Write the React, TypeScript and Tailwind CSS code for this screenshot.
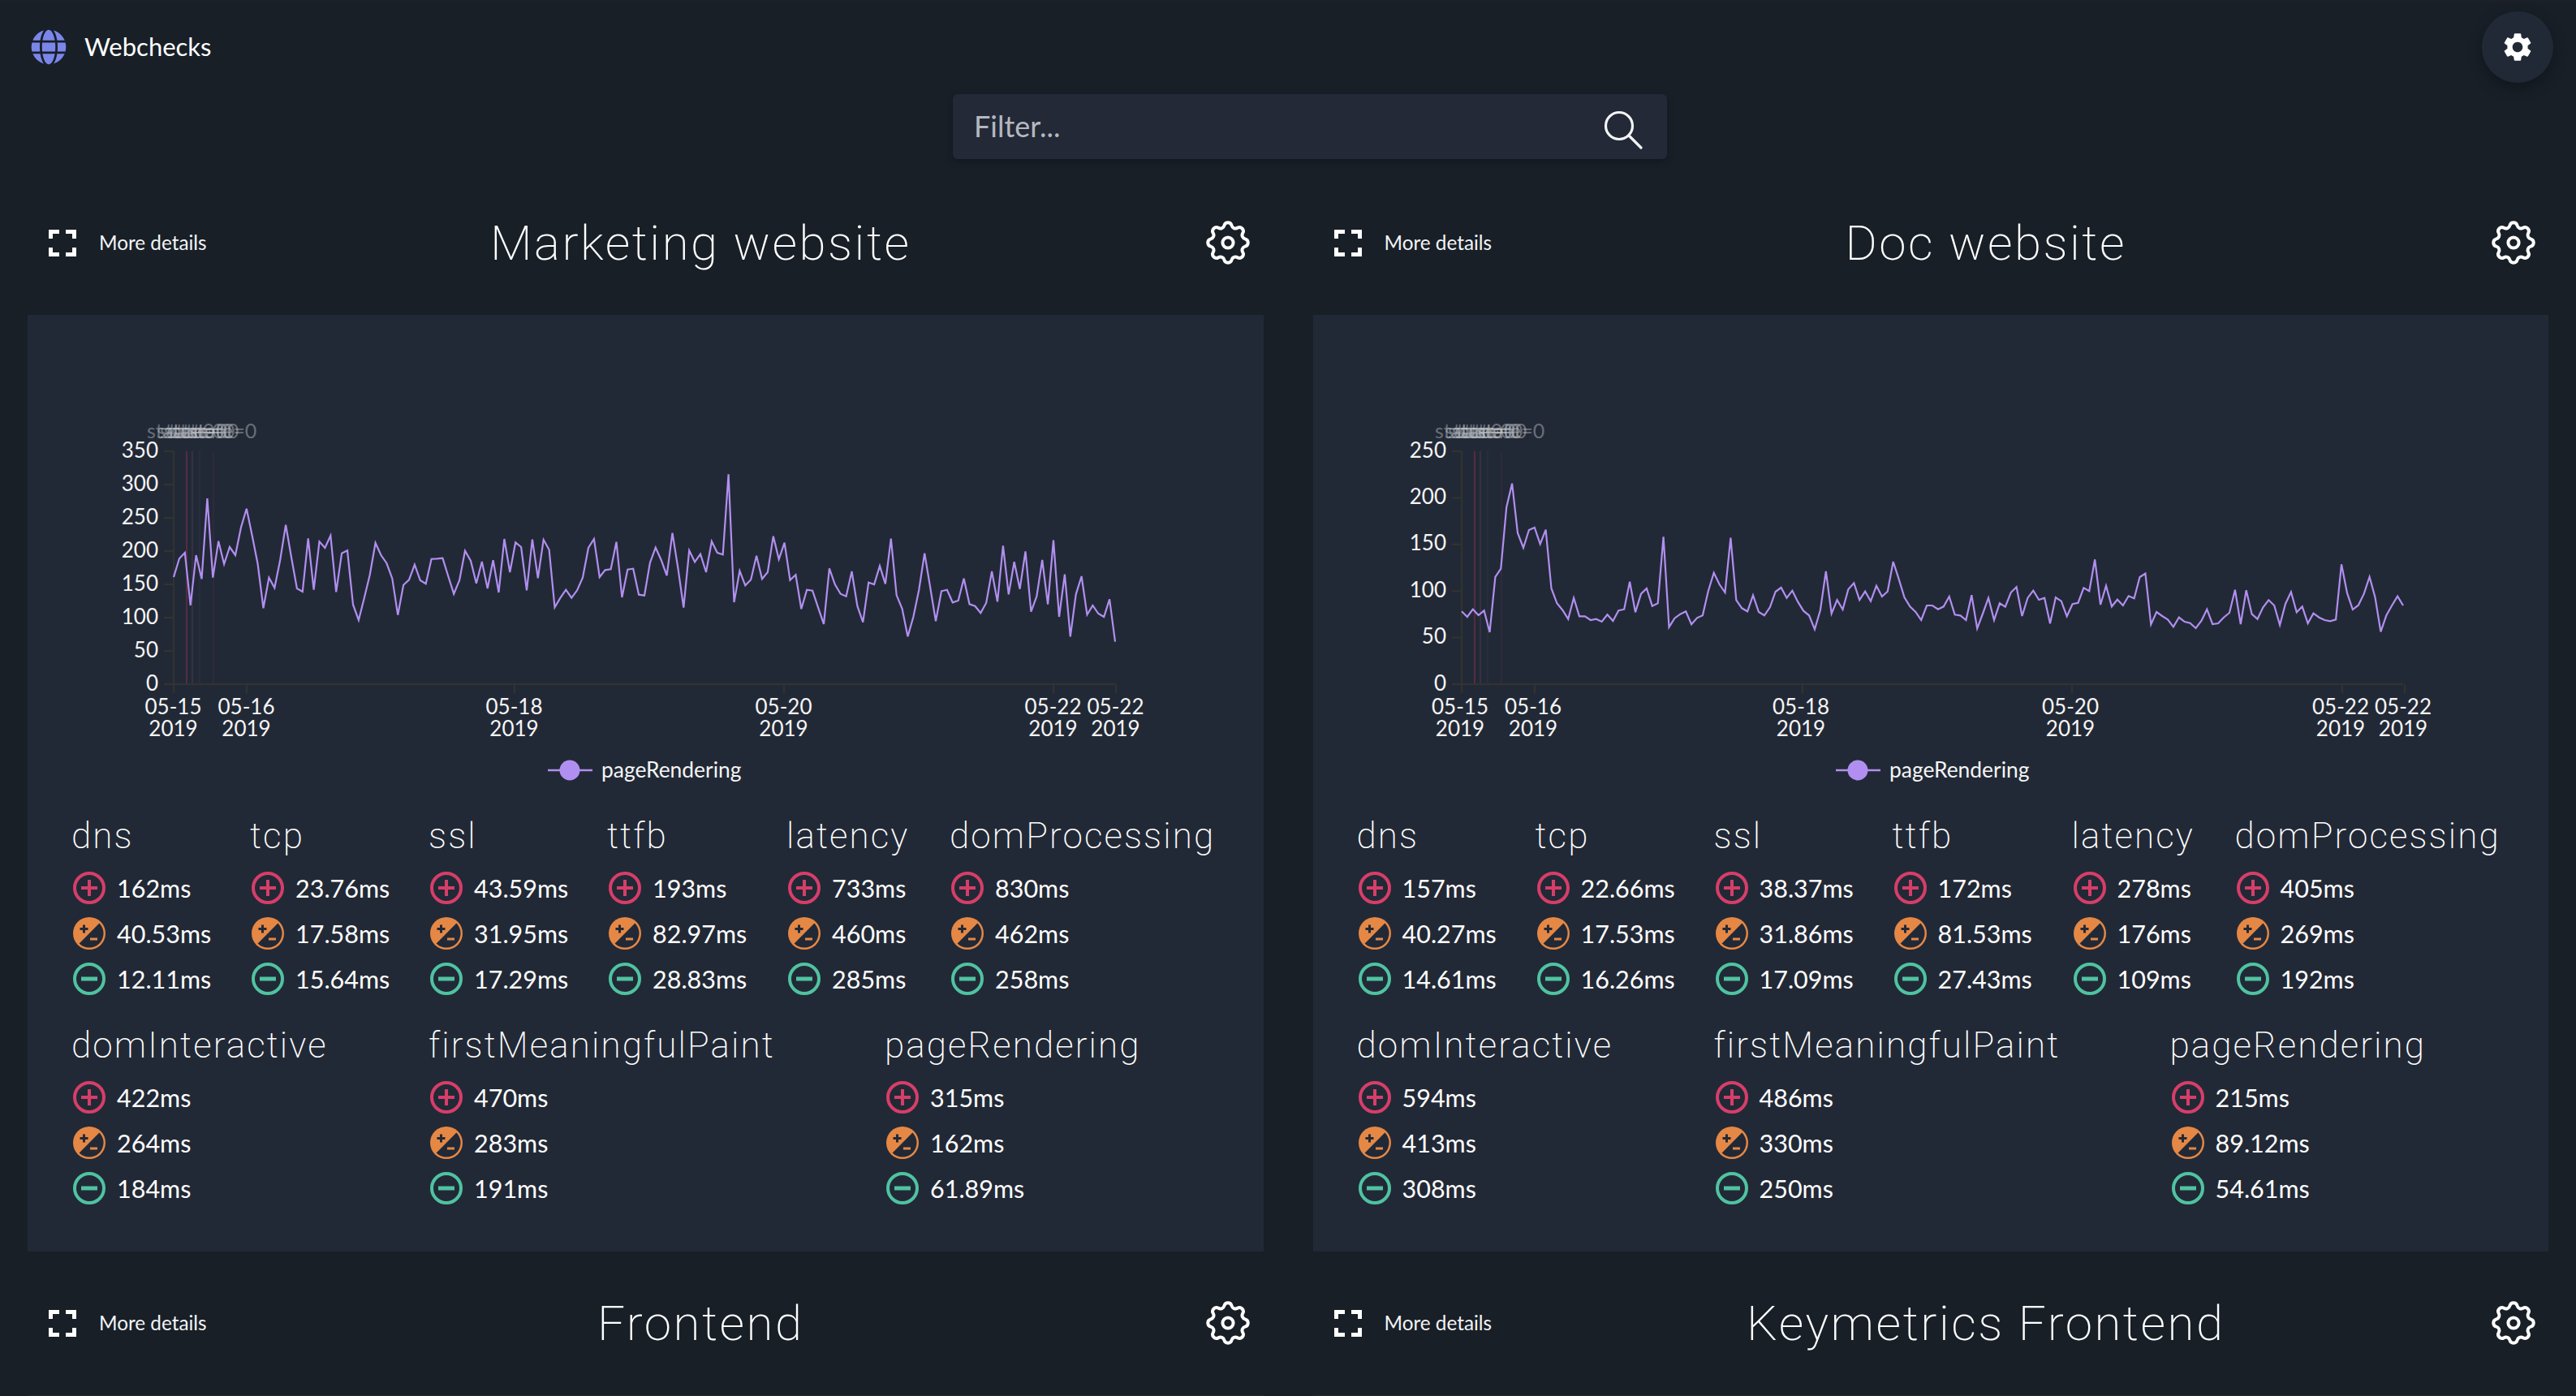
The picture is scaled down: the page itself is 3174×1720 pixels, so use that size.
import React from "react";
import { FaGlobe } from "react-icons/fa";
import { MdSettings } from "react-icons/md";

const A1 = [663,595,573,768,582,670,372,665,530,615,552,582,480,410,510,615,778,665,703,600,470,590,705,717,520,710,532,555,510,718,575,565,765,822,740,655,537,582,612,668,803,692,673,617,675,688,596,595,593,660,725,675,566,603,686,606,705,601,720,522,645,535,552,712,524,667,525,562,775,740,710];
const A2 = [590,562,515,405,372,513,487,484,383,588,485,482,578,581,460,404,450,507,350,480,626,415,457,428,495,381,423,430,133,606,490,544,523,434,520,495,362,447,386,524,505,631,560,563,625,687,481,540,575,584,492,620,680,533,540,472,538,371,580,630,733,660,560,425,550,676,565,560,607,600,518,613,620,646,608,492,604,397,577,457,557,418,641,585,450,614,377,660,503,733,577,510,652,618,648,660,595,752].map((v) => v + 150);
const B1 = [790,810,782,804,787,867,663,632,405,317,500,555,489,480,541,488,705,760,785,818,740,808,808,822,818,828,802,825,787,782,680,793,725,705,770,760,514,848,815,800,790,838,814,805,715,647,690,720,518,748,778,790,730,792,805,775,717,702,740,713,755,788,805,856,785,642,798,748,783,708,685,748,716,752,695,735,716,606,670,738,772,792,822,768,768,782,772];
const B2 = [585,652,655,672,580,703,648,590,672,610,623,570,550,657,590,563,597,590,685,588,602,658,613,608,553,565,448,615,545,622,596,618,583,592,513,500,688,642,657,670,697,662,678,683,702,675,632,687,684,662,645,560,687,562,650,668,625,598,618,690,612,568,643,622,684,647,662,672,676,670,466,572,633,617,575,512,588,715,655,618,584,618].map((v) => v + 150);

type Metric = { name: string; w: string; values: [string, string, string] };
type ChartData = { ticks: number[]; points: number[]; x0: number; x1: number; xt: number[]; labels: number[]; labelShift: number };

const LATO = "font-['Lato','Liberation_Sans',sans-serif]";

function Plus() {
  return (
    <svg viewBox="0 0 40 40" className="w-10 h-10 shrink-0">
      <circle cx="20" cy="20" r="18" fill="none" stroke="#d63e69" strokeWidth="4" />
      <path d="M10 20H30M20 10V30" stroke="#d63e69" strokeWidth="4" />
    </svg>
  );
}
function Mid() {
  return (
    <svg viewBox="0 0 40 40" className="w-10 h-10 shrink-0">
      <circle cx="20" cy="20" r="20" fill="#e58845" />
      <path d="M32.4 7.6 A17.5 17.5 0 0 1 7.6 32.4 Z" fill="#222936" />
      <path d="M8.5 14.5H18.5M13.5 9.5V19.5" stroke="#222936" strokeWidth="3" />
      <path d="M21 27H30" stroke="#e58845" strokeWidth="3" />
    </svg>
  );
}
function Minus() {
  return (
    <svg viewBox="0 0 40 40" className="w-10 h-10 shrink-0">
      <circle cx="20" cy="20" r="18" fill="none" stroke="#4fc3a1" strokeWidth="4" />
      <path d="M10 20H30" stroke="#4fc3a1" strokeWidth="5" />
    </svg>
  );
}

function Gear() {
  return (
    <svg viewBox="0 0 24 24" className="w-[66px] h-[66px]" fill="none" stroke="#fff" strokeWidth="1.45" strokeLinejoin="round">
      <path d="M10.325 4.317c.426-1.756 2.924-1.756 3.35 0a1.724 1.724 0 002.573 1.066c1.543-.94 3.31.826 2.37 2.37a1.724 1.724 0 001.065 2.572c1.756.426 1.756 2.924 0 3.35a1.724 1.724 0 00-1.066 2.573c.94 1.543-.826 3.31-2.37 2.37a1.724 1.724 0 00-2.572 1.065c-.426 1.756-2.924 1.756-3.35 0a1.724 1.724 0 00-2.573-1.066c-1.543.94-3.31-.826-2.37-2.37a1.724 1.724 0 00-1.065-2.572c-1.756-.426-1.756-2.924 0-3.35a1.724 1.724 0 001.066-2.573c-.94-1.543.826-3.31 2.37-2.37.996.608 2.296.07 2.572-1.065z" />
      <circle cx="12" cy="12" r="2.4" />
    </svg>
  );
}

function Stat({ m }: { m: Metric }) {
  const icons = [<Plus key="p" />, <Mid key="m" />, <Minus key="n" />];
  return (
    <div className={m.w}>
      <div className="font-['Roboto',sans-serif] font-extralight text-[44px] leading-[52px] tracking-[2.1px] text-white whitespace-nowrap">{m.name}</div>
      <div className="mt-[18px] flex flex-col gap-[16px] pl-[2px]">
        {m.values.map((v, i) => (
          <div key={i} className="flex items-center gap-[14px] h-10">
            {icons[i]}
            <span className="text-[30.5px] leading-10 text-white whitespace-nowrap">{v}</span>
          </div>
        ))}
      </div>
    </div>
  );
}

function Chart({ c }: { c: ChartData }) {
  const top = 168;
  const base = 455;
  const step = (c.x1 - c.x0) / (c.points.length - 1);
  const pts = c.points.map((v, i) => `${(c.x0 + i * step).toFixed(1)},${(v / 3 + 490 - 388).toFixed(1)}`).join(" ");
  const n = c.ticks.length - 1;
  const overlays = [-33, -21, -17, -12, -8, -3, 19];
  return (
    <svg width="1500" height="590" className="block" fontFamily="Lato, sans-serif">
      {overlays.map((d, i) => (
        <text key={i} x={c.x0 + d} y={152} fontSize="25" fill="#c4c7cc" fillOpacity={0.45}>state=0</text>
      ))}
      {[16, 23, 32, 49].map((d, i) => (
        <line key={d} x1={c.x0 + d} x2={c.x0 + d} y1={top} y2={base} stroke={i === 0 ? "#8a2f50" : i === 1 ? "#4b3a55" : i === 2 ? "#2e3444" : "#3a2f40"} strokeWidth="1" />
      ))}
      <path d={`M${c.x0} ${top}V${base + 11}M${c.x0} ${base}H${c.x1}`} stroke="#33332f" strokeWidth="2" fill="none" />
      {c.ticks.map((t, i) => {
        const y = base - (i / n) * (base - top);
        return (
          <g key={t}>
            <line x1={c.x0 - 12} x2={c.x0} y1={y} y2={y} stroke="#33332f" strokeWidth="2" />
            <text x={c.x0 - 19} y={y + 7.5} fontSize="26" fill="#f5f5f5" textAnchor="end">{t}</text>
          </g>
        );
      })}
      {c.xt.map((x, i) => (
        <g key={x}>
          <line x1={x} x2={x} y1={base} y2={base + 11} stroke="#33332f" strokeWidth="2" />
          <text textAnchor="middle" fontSize="26" fill="#f5f5f5">
            <tspan x={x + c.labelShift} y={base + 37}>{`05-${c.labels[i]}`}</tspan>
            <tspan x={x + c.labelShift} y={base + 64}>2019</tspan>
          </text>
        </g>
      ))}
      <polyline points={pts} fill="none" stroke="#b18ff0" strokeWidth="2.2" strokeLinejoin="miter" />
      <line x1={c.x0 + 461} x2={c.x0 + 516} y1={561} y2={561} stroke="#b18ff0" strokeWidth="2.5" />
      <circle cx={c.x0 + 488} cy={561} r="12.5" fill="#b18ff0" />
      <text x={c.x0 + 527} y={570} fontSize="26.4" fill="#f5f5f5">pageRendering</text>
    </svg>
  );
}

function Corners() {
  return (
    <svg viewBox="0 0 34 33" className="w-[34px] h-[33px] shrink-0" fill="none" stroke="#fff" strokeWidth="5">
      <path d="M13 2.5H2.5V11M21 2.5H31.5V11M2.5 22V30.5H13M31.5 22V30.5H21" />
    </svg>
  );
}

function CardHeader({ title }: { title: string }) {
  return (
    <div className="h-[177px] pb-[1px] flex items-center justify-between pl-[26px] pr-[10px] text-white">
      <div className="flex items-center gap-[28px] w-[260px]">
        <Corners />
        <span className="text-[24.3px] text-[#f3f4f6] whitespace-nowrap">More details</span>
      </div>
      <h2 className="mt-[2px] font-['Roboto',sans-serif] font-extralight text-[60px] leading-none tracking-[2.5px] text-white whitespace-nowrap">{title}</h2>
      <div className="w-[140px] flex justify-end">
        <Gear />
      </div>
    </div>
  );
}

function Card({ title, chart, row1, row2 }: { title: string; chart?: ChartData; row1?: Metric[]; row2?: Metric[] }) {
  return (
    <section className="min-w-0">
      <CardHeader title={title} />
      <div className="h-[1154px] bg-[#222936]">
        {chart && row1 && row2 && (
          <>
            <Chart c={chart} />
            <div className="pl-[54px] mt-[26px] flex flex-col gap-[36px]">
              <div className="flex">{row1.map((m) => <Stat key={m.name} m={m} />)}</div>
              <div className="flex">{row2.map((m) => <Stat key={m.name} m={m} />)}</div>
            </div>
          </>
        )}
      </div>
    </section>
  );
}

const W = ["w-[220px]", "w-[220px]", "w-[220px]", "w-[221px]", "w-[201px]", "w-[320px]"];
const N1 = ["dns", "tcp", "ssl", "ttfb", "latency", "domProcessing"];
const N2 = ["domInteractive", "firstMeaningfulPaint", "pageRendering"];
const W2 = ["w-[440px]", "w-[562px]", "w-[320px]"];
const mk = (names: string[], ws: string[], vals: [string, string, string][]): Metric[] =>
  names.map((n, i) => ({ name: n, w: ws[i], values: vals[i] }));

const m1a = mk(N1, W, [["162ms","40.53ms","12.11ms"],["23.76ms","17.58ms","15.64ms"],["43.59ms","31.95ms","17.29ms"],["193ms","82.97ms","28.83ms"],["733ms","460ms","285ms"],["830ms","462ms","258ms"]]);
const m1b = mk(N2, W2, [["422ms","264ms","184ms"],["470ms","283ms","191ms"],["315ms","162ms","61.89ms"]]);
const m2a = mk(N1, W, [["157ms","40.27ms","14.61ms"],["22.66ms","17.53ms","16.26ms"],["38.37ms","31.86ms","17.09ms"],["172ms","81.53ms","27.43ms"],["278ms","176ms","109ms"],["405ms","269ms","192ms"]]);
const m2b = mk(N2, W2, [["594ms","413ms","308ms"],["486ms","330ms","250ms"],["215ms","89.12ms","54.61ms"]]);

const c1: ChartData = { ticks: [0,50,100,150,200,250,300,350], points: [...A1, ...A2], x0: 180, x1: 1340, xt: [180,270,600,932,1264,1341], labels: [15,16,18,20,22,22], labelShift: -0.5 };
const c2: ChartData = { ticks: [0,50,100,150,200,250], points: [...B1, ...B2], x0: 183, x1: 1343, xt: [183,273,603,935,1268,1345], labels: [15,16,18,20,22,22], labelShift: -2 };

export default function App() {
  return (
    <div className={`${LATO} relative h-[1720px] w-[3174px] overflow-hidden bg-[#181f27] border-t-[3px] border-[#1c2029]`}>
      <header className="h-[113px] flex items-start pl-[38px] pt-[33px]">
        <FaGlobe className="w-[44px] h-[44px] text-[#7a86e8]" />
        <span className="ml-[22px] text-[31px] leading-[42px] text-white">Webchecks</span>
      </header>
      <button className="absolute right-[28px] top-[11px] w-[88px] h-[88px] rounded-full bg-[#222936] flex items-center justify-center shadow-[0_6px_18px_rgba(0,0,0,0.3)]">
        <MdSettings className="w-[42px] h-[42px] text-white" />
      </button>
      <div className="w-[880px] h-[80px] ml-[1174px] rounded-[6px] bg-[#232937] shadow-[0_3px_8px_rgba(0,0,0,0.25)] flex items-center justify-between pl-[26px] pr-[30px]">
        <span className="text-[36px] leading-[44px] pb-[3px] text-[#b5b8bf]">Filter...</span>
        <svg viewBox="0 0 48 56" className="w-[48px] h-[56px]" fill="none" stroke="#f3f4f6" strokeWidth="3.2">
          <circle cx="19" cy="27" r="16.5" />
          <path d="M31 39L46 54" strokeLinecap="round" />
        </svg>
      </div>
      <main className="mt-[15px] ml-[34px] w-[3106px] grid grid-cols-2 gap-x-[61px]">
        <Card title="Marketing website" chart={c1} row1={m1a} row2={m1b} />
        <Card title="Doc website" chart={c2} row1={m2a} row2={m2b} />
        <Card title="Frontend" />
        <Card title="Keymetrics Frontend" />
      </main>
    </div>
  );
}
